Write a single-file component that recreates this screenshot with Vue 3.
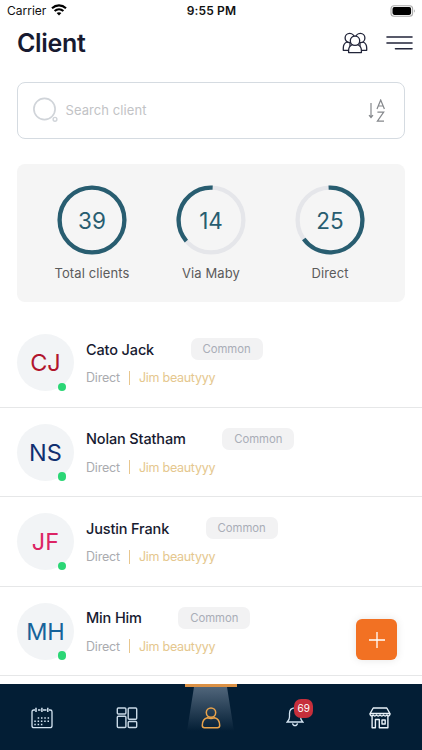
<script setup>
const stats = [
  { value: 39, label: 'Total clients', share: 1, start: 0 },
  { value: 14, label: 'Via Maby', share: 0.37, start: 229.5 },
  { value: 25, label: 'Direct', share: 0.656, start: -2.5 }
]

const clients = [
  { initials: 'CJ', name: 'Cato Jack', tone: 'red' },
  { initials: 'NS', name: 'Nolan Statham', tone: 'navy' },
  { initials: 'JF', name: 'Justin Frank', tone: 'pink' },
  { initials: 'MH', name: 'Min Him', tone: 'blue' }
]

const circumference = 2 * Math.PI * 32.4
</script>

<template>
  <div class="screen">
    <div class="status">
      <div class="carrier">
        <span>Carrier</span>
        <svg width="16" height="12" viewBox="0 0 16 12" fill="none" stroke="#000" stroke-width="2.1">
          <path d="M1 4.2C5 .4 11 .4 15 4.2" />
          <path d="M3.6 7C6.2 4.7 9.8 4.7 12.4 7" />
          <path d="M5.6 9.1C7 7.9 9 7.9 10.4 9.1L8 11.5Z" fill="#000" stroke="none" />
        </svg>
      </div>
      <span class="time">9:55 PM</span>
      <svg class="battery" width="26" height="12" viewBox="0 0 26 12">
        <rect x="1" y=".7" width="21.6" height="10.6" rx="3" fill="#fff" stroke="#aaa" stroke-width="1.1" />
        <rect x="2.5" y="2.1" width="18.6" height="7.8" rx="1.8" fill="#000" />
        <path d="M24.2 4.2Q25.6 6 24.2 7.8Z" fill="#888" />
      </svg>
    </div>

    <header class="header">
      <h1>Client</h1>
      <svg class="people" width="26" height="22" viewBox="0 0 26 22" fill="#fff" stroke="#22253a" stroke-width="1.3" stroke-linejoin="round">
        <path d="M1.3 18.3V16Q1.3 11.5 5 10H8V18.3ZM24.7 18.3V16Q24.7 11.5 21 10H18V18.3Z" />
        <circle cx="7.7" cy="6" r="4.6" />
        <circle cx="18.3" cy="6" r="4.6" />
        <path d="M6.6 20.6V18.5Q6.6 14.5 10 12.7H16Q19.4 14.5 19.4 18.5V20.6Z" />
        <circle cx="13" cy="8.7" r="4.7" />
      </svg>
      <svg class="menu" width="28" height="16" viewBox="0 0 28 16" stroke="#22253a" stroke-width="1.6" stroke-linecap="round">
        <path d="M1 2H26M1 8H26M9.5 13.8H26" />
      </svg>
    </header>

    <div class="search">
      <svg width="27" height="27" viewBox="0 0 27 27" fill="none" stroke="#d0d4d9">
        <circle cx="11.5" cy="12" r="10.6" stroke-width="1.7" />
        <circle cx="22" cy="22.3" r="1.9" stroke-width="1.4" />
      </svg>
      <span class="placeholder">Search client</span>
      <svg class="sort" width="18" height="24" viewBox="0 0 18 24" fill="none" stroke="#85888c" stroke-width="1.2">
        <path d="M3 4V18M1 16.2L3 18.5L5 16.2M9 10L12.7 1L16.4 10M10.3 7H15.1M9.4 13.2H15.7L9.4 22.2H16" />
      </svg>
    </div>

    <section class="stats">
      <div v-for="s in stats" :key="s.label" class="stat">
        <div class="ring">
          <svg width="70" height="70" viewBox="0 0 70 70" fill="none" stroke-width="4.3">
            <circle cx="35" cy="35" r="32.4" stroke="#e5e6ea" />
            <circle
              cx="35" cy="35" r="32.4" stroke="#285d70"
              :stroke-dasharray="`${s.share * circumference} ${circumference}`"
              :transform="`rotate(${s.start - 90} 35 35)`"
            />
          </svg>
          <span class="value">{{ s.value }}</span>
        </div>
        <span class="label">{{ s.label }}</span>
      </div>
    </section>

    <main class="list">
      <article v-for="c in clients" :key="c.initials" class="row">
        <div class="avatar" :class="c.tone">
          <span>{{ c.initials }}</span>
          <i class="online"></i>
        </div>
        <div class="info">
          <div class="top">
            <span class="name">{{ c.name }}</span>
            <span class="tag">Common</span>
          </div>
          <div class="bottom">
            <span class="source">Direct</span>
            <i class="bar"></i>
            <span class="owner">Jim beautyyy</span>
          </div>
        </div>
      </article>
    </main>

    <button class="add" aria-label="Add">
      <svg width="18" height="18" viewBox="0 0 18 18" stroke="#fff" stroke-width="1.3">
        <path d="M9 1V17M1 9H17" />
      </svg>
    </button>

    <nav class="tabs">
      <div class="tab">
        <svg width="22" height="22" viewBox="0 0 22 22" fill="none" stroke="#d5e5f2" stroke-width="1.3">
          <path d="M4 3H2.8Q1 3 1 4.8V18.7Q1 20.7 3 20.7H19Q21 20.7 21 18.7V4.8Q21 3 19.2 3H18M7 3H9.5M12 3H15.5" />
          <path d="M5 .8V5M10.9 .8V5M16.8 .8V5" stroke-width="1.5" />
          <path d="M6.7 11H19M3.3 14.2H19M3.3 17.4H12.5" stroke-width="1.5" stroke-dasharray="1.5 1.8" />
        </svg>
      </div>
      <div class="tab">
        <svg width="22" height="22" viewBox="0 0 22 22" fill="none" stroke="#c9d9e6" stroke-width="1.4">
          <rect x="1.3" y="1" width="8.6" height="6" rx="1" />
          <rect x="1.3" y="9.3" width="8.6" height="11.2" rx="1" />
          <rect x="12.2" y="1" width="8.5" height="11.2" rx="1" />
          <rect x="12.2" y="14.5" width="8.5" height="6" rx="1" />
        </svg>
      </div>
      <div class="tab active">
        <svg class="beam" width="52" height="44" viewBox="0 0 52 44">
          <defs>
            <linearGradient id="beam" x1="0" y1="0" x2="0" y2="1">
              <stop offset="0" stop-color="#50657a" />
              <stop offset="1" stop-color="#50657a" stop-opacity="0" />
            </linearGradient>
          </defs>
          <path d="M9 0H42L49 44H2Z" fill="url(#beam)" />
        </svg>
        <svg class="icon" width="20" height="22" viewBox="0 0 20 22" fill="none" stroke="#e9a34b" stroke-width="1.5">
          <circle cx="10" cy="5.6" r="4.7" />
          <path d="M6.5 10.8C3 11.5 1.3 14.5 1.3 18.6Q1.3 20.8 3.5 20.8H16.5Q18.7 20.8 18.7 18.6C18.7 14.5 17 11.5 13.5 10.8Q10 12 6.5 10.8Z" />
        </svg>
      </div>
      <div class="tab bell">
        <svg width="18" height="21" viewBox="0 0 18 21" fill="none" stroke="#d5e5f2" stroke-width="1.3">
          <path d="M1.2 15H16.8Q14.5 12.8 14.5 10V6.5C14.5 3 12.3 .8 9 .8C5.7 .8 3.5 3 3.5 6.5V10Q3.5 12.8 1.2 15ZM6.5 16.4Q7 18.7 9 18.7Q11 18.7 11.5 16.4" />
        </svg>
        <span class="badge">69</span>
      </div>
      <div class="tab">
        <svg width="22" height="22" viewBox="0 0 22 22" fill="none" stroke="#e8f1f8" stroke-width="1.4" stroke-linejoin="round">
          <path d="M4.2 1H17.8L20.9 6.5H1.1Z" />
          <path d="M1.1 6.5V7.6Q2.6 10.2 4.1 7.9Q5.8 10.2 7.5 7.9Q9.2 10.2 11 7.9Q12.8 10.2 14.5 7.9Q16.2 10.2 17.9 7.9Q19.4 10.2 20.9 7.6V6.5M3.1 9V20.7H6.4V12.5H10.3V20.7H18.9V9M13 13H16.2V17H13Z" />
        </svg>
      </div>
    </nav>
  </div>
</template>

<style>
body { background: #fff; }
</style>

<style scoped>
.screen {
  position: relative;
  display: flex;
  flex-direction: column;
  width: 422px;
  height: 750px;
  overflow: hidden;
  background: #fff;
  color: #171a30;
  font-family: Inter, "Liberation Sans", sans-serif;
}
.screen * { box-sizing: border-box; }
svg { display: block; flex: none; }
.status {
  display: grid;
  grid-template-columns: 1fr auto 1fr;
  align-items: center;
  height: 22px;
  padding: 0 6px 0 7px;
  color: #111;
  font-size: 12px;
  line-height: 22px;
}
.carrier { display: flex; align-items: center; gap: 5px; }
.carrier svg { margin-top: -2px; }
.time { font-weight: 600; letter-spacing: .15px; }
.battery { justify-self: end; margin-top: -1px; }
.header {
  display: flex;
  align-items: center;
  height: 42px;
  padding: 0 8px 0 17px;
}
h1 {
  flex: 1;
  margin: 0;
  font-size: 25px;
  font-weight: 600;
  line-height: 42px;
  letter-spacing: -.3px;
}
.people { margin-right: 18px; }
.search {
  display: flex;
  flex: none;
  align-items: center;
  height: 57px;
  margin: 18px 17px 0;
  padding: 0 18px 0 15px;
  border: 1px solid #d5dbe1;
  border-radius: 8px;
}
.placeholder {
  flex: 1;
  margin: -1px 0 0 5.5px;
  color: #c2c3c6;
  font-size: 13px;
  letter-spacing: .08px;
}
.stats {
  display: grid;
  grid-template-columns: repeat(3, 119px);
  justify-content: center;
  flex: none;
  height: 138px;
  margin: 24.5px 17px 0;
  padding-top: 21.5px;
  border-radius: 8px;
  background: #f5f5f5;
}
.stat { display: flex; flex-direction: column; align-items: center; }
.ring { display: grid; place-items: center; }
.ring > * { grid-area: 1 / 1; }
.value { padding-top: 1px; color: #285d70; font-size: 22.5px; line-height: 28px; }
.label { margin-top: 9px; color: #5b5b5b; font-size: 13px; line-height: 18px; letter-spacing: .12px; }
.list { margin-top: 16.5px; flex: none; }
.row {
  display: flex;
  height: 89.6px;
  padding: 16.2px 17px 0;
  border-bottom: 1px solid #e6e7e8;
}
.avatar {
  position: relative;
  display: grid;
  place-items: center;
  flex: none;
  width: 57px;
  height: 57px;
  border-radius: 50%;
  background: #f2f4f6;
  font-size: 23.5px;
}
.red { color: #b1152d; }
.navy { color: #102f70; }
.pink { color: #dc2464; }
.blue { color: #17639a; }
.online {
  position: absolute;
  right: 8px;
  bottom: 0;
  width: 8.5px;
  height: 8.5px;
  border-radius: 50%;
  background: #2bd675;
}
.info { margin-left: 12px; padding-top: 4px; }
.top { display: flex; align-items: center; height: 22px; }
.name { font-size: 14.5px; font-weight: 500; letter-spacing: -.14px; white-space: nowrap; }
.tag {
  width: 72px;
  height: 22px;
  margin-left: 36.5px;
  border-radius: 7px;
  background: #f2f2f3;
  color: #a9adb7;
  font-size: 11.3px;
  line-height: 23.5px;
  text-align: center;
}
.bottom { display: flex; align-items: center; height: 18px; margin-top: 8.5px; font-size: 12.5px; }
.source { width: 34px; color: #aaabaf; letter-spacing: -.18px; }
.bar { width: 1px; height: 14px; margin: 0 9px 0 9px; background: #e8c68d; }
.owner { color: #e5c78e; letter-spacing: -.28px; }
.add {
  position: absolute;
  top: 619px;
  left: 356px;
  display: grid;
  place-items: center;
  width: 41px;
  height: 41px;
  padding: 0;
  border: 0;
  border-radius: 6px;
  background: #f27123;
  box-shadow: 0 0 8px rgba(0, 0, 0, .1);
}
.tabs {
  position: absolute;
  right: 0;
  bottom: 0;
  left: 0;
  display: grid;
  grid-template-columns: repeat(5, 1fr);
  height: 66.5px;
  background: #031e35;
}
.tab { position: relative; display: flex; justify-content: center; padding-top: 23px; }
.active::before {
  content: "";
  position: absolute;
  top: 0;
  left: 16px;
  width: 52px;
  height: 3px;
  background: #db9145;
}
.beam { position: absolute; top: 3px; left: 16px; }
.icon { position: relative; }
.badge {
  position: absolute;
  top: 15px;
  left: 41px;
  width: 19px;
  height: 19px;
  border-radius: 7px;
  background: #c62f3b;
  color: #fff;
  font-size: 10px;
  line-height: 19px;
  text-align: center;
}
</style>
